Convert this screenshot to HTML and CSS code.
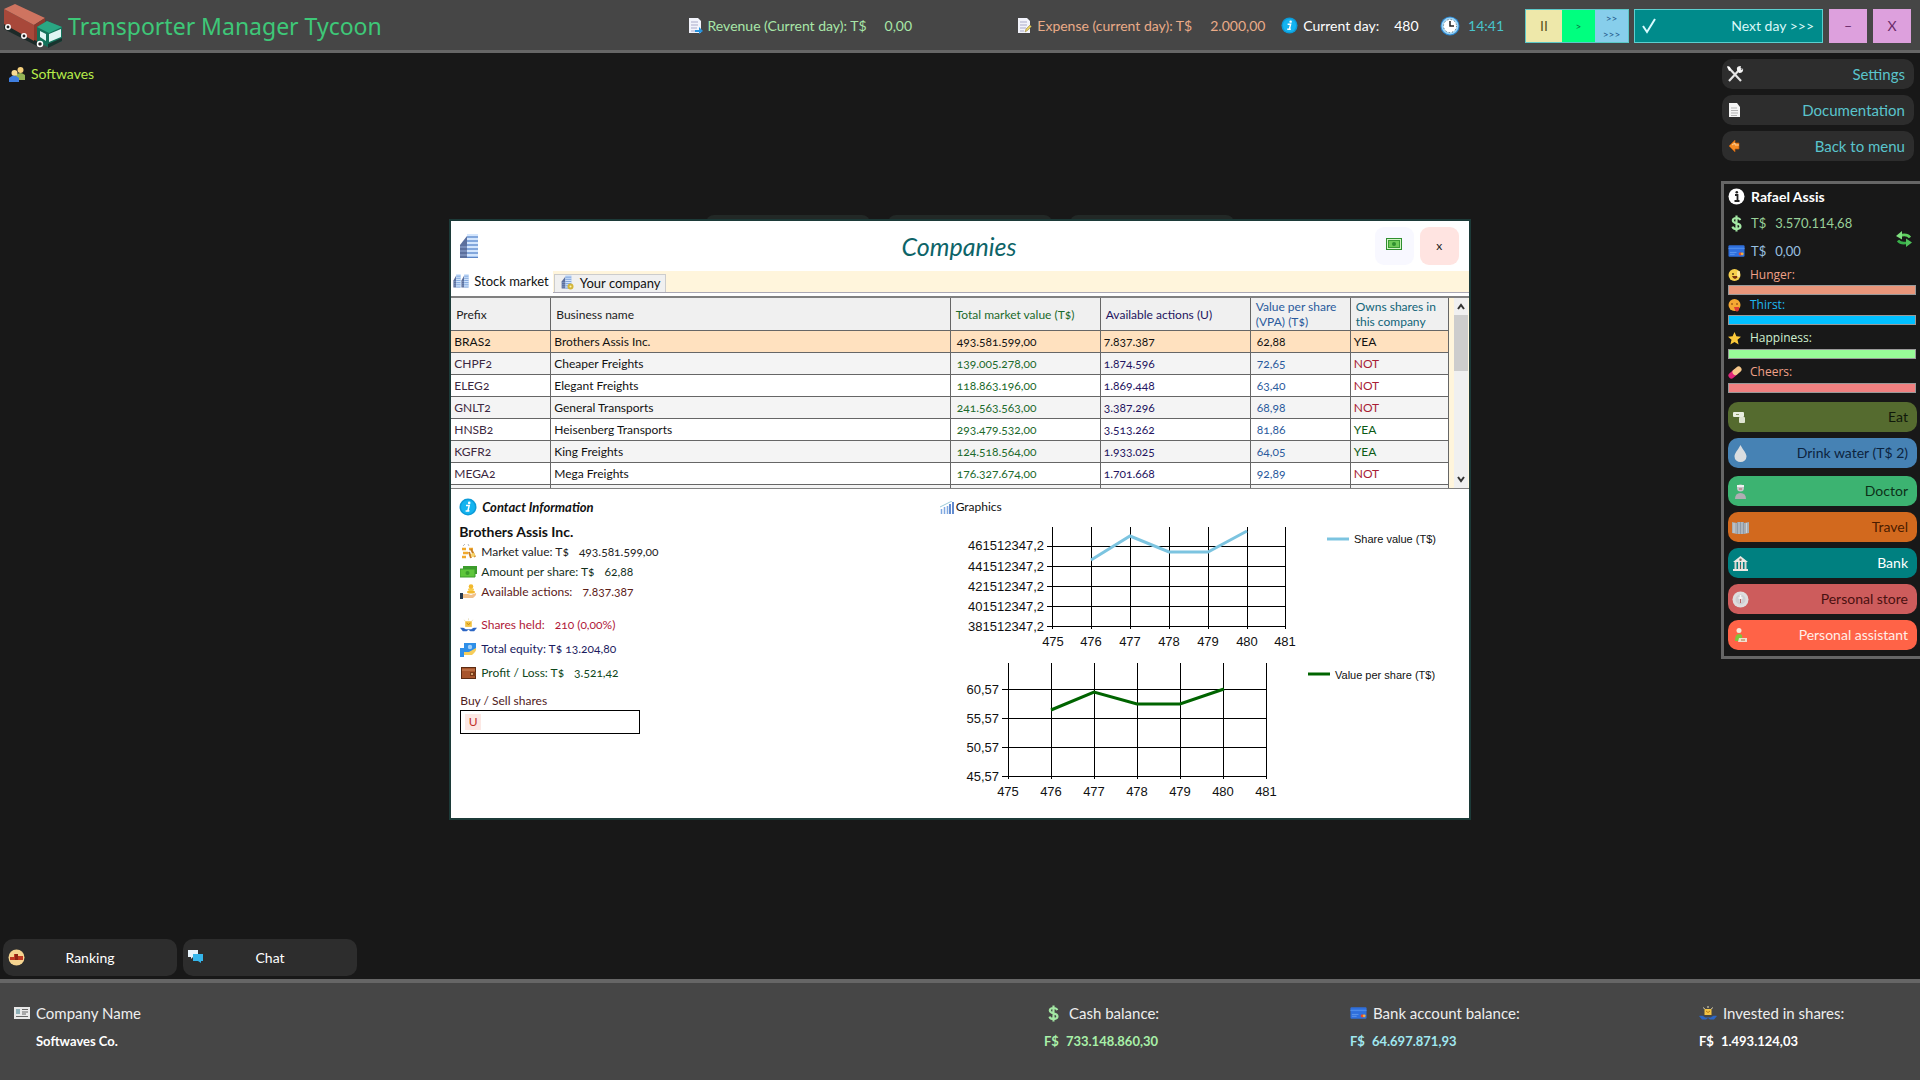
FILE: index.html
```html
<!DOCTYPE html>
<html lang="en">
<head>
	<meta charset="utf-8">
	<title>Transporter Manager Tycoon</title>
	<link rel="stylesheet" href="styles.css">
</head>
<body>

	<!-- shared icons -->
	<svg class="sprite" width="0" height="0" aria-hidden="true">
		<symbol id="i-info" viewBox="0 0 18 18">
			<circle cx="9" cy="9" r="8.5" fill="#0c9bd8"/>
			<circle cx="9" cy="9" r="7" fill="#14b4f0"/>
			<circle cx="10.2" cy="4.9" r="1.3" fill="#fff"/>
			<path d="M7 7.6h3.2l-1.3 5.2h1.5M6.6 12.9h3.6" stroke="#fff" stroke-width="1.5" fill="none"/>
		</symbol>
		<symbol id="i-dollar" viewBox="0 0 12 18">
			<path d="M10 5.4C9.4 3.9 8 3.2 6 3.2c-2.300 0-3.900 1-3.900 2.700C2.100 9.900 10.200 7.900 10.200 12c0 1.800-1.700 2.900-4.100 2.900-2.300 0-3.800-.9-4.400-2.600M6 .5v17" stroke="#a4e8a4" stroke-width="2.300" fill="none"/>
		</symbol>
		<symbol id="i-card" viewBox="0 0 18 14">
			<rect x=".5" y="1" width="17" height="12" rx="1" fill="#2f6fdc"/>
			<path d="M.5 3.500h17v1.500H.5z" fill="#4c8bea"/>
			<path d="M2 8.500h7M2 10.500h5" stroke="#5f97ec"/>
			<circle cx="13" cy="10" r="1.700" fill="#e8452c"/>
			<circle cx="15" cy="10" r="1.500" fill="#f4b03a"/>
		</symbol>
		<symbol id="i-tower" viewBox="0 0 20 26">
			<path d="M1 12L8 3v22H1z" fill="#5b6f9c"/>
			<path d="M8 1h11v24H8z" fill="#a9c8f2"/>
			<path d="M8 2h11M8 6h11M8 10h11M8 14h11M8 18h11M8 22h11" stroke="#d4e6fd" stroke-width="2"/>
			<path d="M8 4h11M8 8h11M8 12h11M8 16h11M8 20h11M8 24.500h11" stroke="#5d86c6"/>
			<path d="M1 14h7M1 18h7M1 22h7" stroke="#96abd4"/>
		</symbol>
		<symbol id="i-shares" viewBox="0 0 18 14">
			<path d="M9 0v2M4.500 1.500l1 1.500M13.500 1.500L12.500 3" stroke="#e9e0c0"/>
			<rect x="5.500" y="3" width="7" height="6" fill="#f3c444"/>
			<path d="M7 5l2 1.500L11 5" stroke="#b97a12" fill="none"/>
			<path d="M0 10c3-.5 5 0 6 1.500h6c1-1.500 3-2 6-1.500l-3 3.500h-4L9 12l-2 1.500H3z" fill="#2c66c4"/>
		</symbol>
	</svg>

	<header class="topbar">
		<div class="brand">
			<svg width="58" height="44" viewBox="0 0 58 44">
				<path d="M0 20l33 16v6L0 25z" fill="#1c2a28"/>
				<path d="M0 5L30 21v16L0 20z" fill="#a8483a"/>
				<path d="M0 5l11-5 30 14-11 7z" fill="#cf7460"/>
				<path d="M30 21l11-7v13l-8 10-3-1z" fill="#8c3a2e"/>
				<path d="M33 23l10-6 15 6v14l-14 6-11-5z" fill="#14715a"/>
				<path d="M33 23l10-6 15 6-13 6z" fill="#2aa783"/>
				<path d="M45 30l12-5v8l-12 5zM36 27l6 3v7l-6-4z" fill="#dff6f4"/>
				<path d="M44 40l14-6v3l-14 7z" fill="#18332e"/>
				<g fill="#222" stroke="#fff" stroke-width="1.500"><circle cx="4" cy="23" r="2.200"/><circle cx="20" cy="32" r="2.200"/><circle cx="36" cy="40" r="2.500"/></g>
			</svg>
			<h1>Transporter Manager Tycoon</h1>
		</div>
		<div class="stat revenue">
			<svg width="14" height="16" viewBox="0 0 14 16"><path d="M0 0h9l3 3v12H0z" fill="#f2f3fb"/><path d="M2 4h7M2 7h7M2 10h6M2 13h4" stroke="#a9a9c9"/><path d="M6 12h4V9l4 4-4 3v-2H6z" fill="#2793dd"/></svg>
			<span>Revenue (Current day): T$</span><span class="val">0,00</span>
		</div>
		<div class="stat expense">
			<svg width="14" height="16" viewBox="0 0 14 16"><path d="M0 0h9l3 3v12H0z" fill="#f2f3fb"/><path d="M2 4h7M2 7h7M2 10h6M2 13h4" stroke="#a9a9c9"/><path d="M7 14l1-3 4-4 1.500 1.500-4 4z" fill="#e7cf62" stroke="#8a7b3a" stroke-width=".5"/></svg>
			<span>Expense (current day): T$</span><span class="val">2.000,00</span>
		</div>
		<div class="stat">
			<svg width="17" height="17"><use href="#i-info"/></svg>
			<span>Current day:</span><span class="day">480</span>
		</div>
		<div class="stat clock">
			<svg width="20" height="20" viewBox="0 0 20 20"><circle cx="10" cy="10" r="9.500" fill="#2b86d0"/><circle cx="10" cy="10" r="8.500" fill="#9bd4f5"/><circle cx="10" cy="10" r="6.500" fill="#fff" stroke="#666" stroke-dasharray="1 2.400"/><path d="M10 5v5h4" stroke="#222" stroke-width="1.500" fill="none"/></svg>
			<span>14:41</span>
		</div>
		<div class="controls">
			<div class="speed">
				<button class="pause">II</button>
				<button class="play">&gt;</button>
				<button class="fast"><span>&gt;&gt;</span><span>&gt;&gt;&gt;</span></button>
			</div>
			<button class="next">
				<svg width="14" height="16" viewBox="0 0 14 16"><path d="M1 8l4 6L13 1" stroke="#d8fbff" stroke-width="2" fill="none"/></svg>
				Next day &gt;&gt;&gt;
			</button>
			<button class="win">–</button>
			<button class="win">X</button>
		</div>
	</header>

	<main>
		<div class="desk">
			<div class="user">
				<svg width="17" height="17" viewBox="0 0 17 17"><circle cx="11.500" cy="4" r="3" fill="#f5d07c"/><path d="M7 14V9q4-4 9 0v5z" fill="#93b254"/><circle cx="5.500" cy="7" r="3" fill="#f8dc93"/><path d="M0 16v-4q5-5 10 0v4z" fill="#3f7fe0"/></svg>
				<span>Softwaves</span>
			</div>
			<div class="ghosts"><div></div><div></div><div></div></div>
			<div class="tools">
				<button>
					<svg width="17" height="17" viewBox="0 0 17 17"><circle cx="8.500" cy="8.500" r="8" fill="#f6d490"/><path d="M2 8h4V5h4v2h5v4H2z" fill="#c23a22"/><path d="M7 5h3v6H7z" fill="#8e2415"/></svg>
					Ranking
				</button>
				<button>
					<svg width="16" height="14" viewBox="0 0 16 14"><path d="M0 1h10v7H5l-2 2V8H0z" fill="#e6f3fb"/><path d="M5 5h10v7h-2v2l-3-2H5z" fill="#35b5ea"/></svg>
					Chat
				</button>
			</div>
		</div>

		<aside>
			<nav>
				<button>
					<svg width="18" height="18" viewBox="0 0 18 18"><path d="M2 2l13 14M15 3L3 16" stroke="#e4e4e4" stroke-width="2.200"/><path d="M11 5q-1-4 4-4l-1 3 2 1 1-2q1 5-4 5z" fill="#f4f4f4"/><path d="M1 1l3 1 1 3-2 1z" fill="#fff"/></svg>
					Settings
				</button>
				<button>
					<svg width="18" height="16" viewBox="0 0 18 16"><path d="M3 1h8l3 4v10H3z" fill="#f4f4f4"/><path d="M5 6h6M5 8.500h7M5 11h7M5 13.500h6" stroke="#b3b3b3"/></svg>
					Documentation
				</button>
				<button>
					<svg width="18" height="14" viewBox="0 0 18 14"><path d="M3 7l6-6v3h4v6H9v3z" fill="#f58a24" stroke="#b85a10" stroke-width=".7"/><path d="M6 6l3-2v2h4" stroke="#ffcf96" fill="none"/></svg>
					Back to menu
				</button>
			</nav>

			<section class="player">
				<div class="line name">
					<svg width="17" height="17" viewBox="0 0 17 17"><circle cx="8.500" cy="8.500" r="8" fill="#fff"/><path d="M7 7h2.500v6M6.500 13h5" stroke="#222" stroke-width="1.800" fill="none"/><circle cx="8.800" cy="4.200" r="1.300" fill="#222"/></svg>
					<span>Rafael Assis</span>
				</div>
				<div class="wallet">
					<div>
						<div class="line cash"><svg width="17" height="17"><use href="#i-dollar"/></svg><span>T$</span><span>3.570.114,68</span></div>
						<div class="line bank"><svg width="17" height="14"><use href="#i-card"/></svg><span>T$</span><span>0,00</span></div>
					</div>
					<button class="refresh" aria-label="Refresh">
						<svg width="18" height="18" viewBox="0 0 18 18"><path d="M15 7.500Q12 3.500 5 5.500" stroke="#5fd05f" stroke-width="2.800" fill="none"/><path d="M7 1v8.500L1 6z" fill="#7fe07f"/><path d="M3 10.500q3 4 10 2" stroke="#38b04a" stroke-width="2.800" fill="none"/><path d="M11 8.500V17l6-4.500z" fill="#4fc25a"/></svg>
					</button>
				</div>
				<div class="need hunger">
					<svg width="14" height="13" viewBox="0 0 14 13"><circle cx="6.500" cy="6" r="6" fill="#f8d04c"/><circle cx="5" cy="5" r="1" fill="#5a3b10"/><path d="M4 7h6q-1 3-3 3T4 7z" fill="#7b3210"/><rect x="9" y="2" width="3" height="6" rx="1" fill="#fce69b"/></svg>
					<label for="hunger">Hunger:</label>
				</div>
				<progress id="hunger" class="hunger" value="100" max="100"></progress>
				<div class="need thirst">
					<svg width="14" height="13" viewBox="0 0 14 13"><circle cx="6.500" cy="6" r="6" fill="#f5a832"/><path d="M3 5h2M8 5h2" stroke="#7b3b10"/><path d="M6 8h5v3q-2 3-4 0z" fill="#dd3b34"/></svg>
					<label for="thirst">Thirst:</label>
				</div>
				<progress id="thirst" class="thirst" value="100" max="100"></progress>
				<div class="need tall happy">
					<svg width="14" height="13" viewBox="0 0 14 13"><path d="M6.500 0l1.900 4.300 4.600.4-3.500 3.100 1.100 4.700-4.100-2.500-4.100 2.500 1.100-4.700L0 4.700l4.600-.4z" fill="#fbc93a"/></svg>
					<label for="happy">Happiness:</label>
				</div>
				<progress id="happy" class="happy" value="100" max="100"></progress>
				<div class="need tall cheers">
					<svg width="14" height="13" viewBox="0 0 14 13"><path d="M3.500 9.500L7 6.500" stroke="#e0257a" stroke-width="6" stroke-linecap="round"/><path d="M7.500 6L10.500 3.500" stroke="#f6c78a" stroke-width="6" stroke-linecap="round"/></svg>
					<label for="cheers">Cheers:</label>
				</div>
				<progress id="cheers" class="cheers" value="100" max="100"></progress>

				<div class="acts">
					<button class="eat"><svg width="17" height="17" viewBox="0 0 17 17"><rect x="1" y="3" width="11" height="5" rx="1" fill="#e9eee0"/><rect x="7" y="8" width="6" height="6" rx="1" fill="#dfe4d2"/><path d="M4 5.500h3" stroke="#8c9a6a"/></svg>Eat</button>
					<button class="drink"><svg width="17" height="17" viewBox="0 0 17 17"><path d="M8.500 0C6 5 2.500 8 2.500 11.500a6 5.500 0 0 0 12 0C14.500 8 11 5 8.500 0z" fill="#d9dde0"/></svg>Drink water (T$ 2)</button>
				</div>
				<div class="acts">
					<button class="doctor"><svg width="17" height="17" viewBox="0 0 17 17"><circle cx="8.500" cy="5" r="3.500" fill="#c5c5c9"/><path d="M5 2h7v2H5z" fill="#f0f0f0"/><path d="M3 16q0-6 5.500-6t5.500 6z" fill="#b0aeb4"/><path d="M7 6h3" stroke="#a66"/></svg>Doctor</button>
					<button class="travel"><svg width="17" height="17" viewBox="0 0 17 17"><path d="M0 3l5 1v11l-5-1zM12 4l5-1v11l-5 1z" fill="#a9adb2"/><path d="M5 3h7v12H5z" fill="#8f99a5"/><path d="M7 3v12M10 3v12M2 4v10M14.500 4v10" stroke="#cbd2d8"/></svg>Travel</button>
					<button class="bankbtn"><svg width="17" height="17" viewBox="0 0 17 17"><path d="M1 7l7.500-6L16 7zM1 14h15v2H1z" fill="#ece9e4"/><path d="M3.500 7v7M7 7v7M10 7v7M13.500 7v7" stroke="#dcd8d2" stroke-width="2"/><path d="M8.500 10v4" stroke="#6b5a50"/><circle cx="8.500" cy="4.800" r="1.200" fill="#7a6c60"/></svg>Bank</button>
					<button class="store"><svg width="17" height="17" viewBox="0 0 17 17"><circle cx="8.500" cy="8.500" r="8" fill="#dedede"/><circle cx="8.500" cy="8.500" r="5" fill="#cfcfd2"/><path d="M8.500 4v7M6.500 7h4" stroke="#f6f6f6" stroke-width="1.500"/><path d="M8.500 8v4" stroke="#b66"/></svg>Personal store</button>
					<button class="assist"><svg width="17" height="17" viewBox="0 0 17 17"><circle cx="7" cy="3.500" r="2.500" fill="#f3e9dc"/><path d="M3 14q0-7 4-7t3 4l-2 3z" fill="#7fc53c"/><path d="M7 11h8v4H6z" fill="#f0dfd0"/><path d="M9 13h4" stroke="#b0773c"/></svg>Personal assistant</button>
				</div>
			</section>
		</aside>

		<div class="dialog" role="dialog" aria-labelledby="dlg-title">
			<div class="dlg-head">
				<svg width="20" height="26"><use href="#i-tower"/></svg>
				<h2 id="dlg-title">Companies</h2>
				<button class="money" aria-label="Money">
					<svg width="16" height="12" viewBox="0 0 16 12"><rect x=".5" y=".5" width="15" height="11" fill="#d6f5c8" stroke="#2f8f2f"/><rect x="2.500" y="2.500" width="11" height="7" fill="#6ecb58" stroke="#3a9b35"/><circle cx="8" cy="6" r="2" fill="#2f8f2f"/></svg>
				</button>
				<button class="close">x</button>
			</div>

			<div class="tabs">
				<button class="tab active">
					<svg width="8" height="14" viewBox="0 0 20 26" preserveAspectRatio="none"><use href="#i-tower" width="20" height="26"/></svg><svg width="8" height="14" viewBox="0 0 20 26" preserveAspectRatio="none"><use href="#i-tower" width="20" height="26"/></svg>
					<span>Stock market</span>
				</button>
				<button class="tab">
					<svg width="14" height="15" viewBox="0 0 14 15"><use href="#i-tower" width="11" height="14"/><circle cx="9.500" cy="11.500" r="3" fill="#d3b63a"/><circle cx="9.500" cy="11.500" r="1" fill="#fff2b0"/></svg>
					<span>Your company</span>
				</button>
			</div>

			<div class="grid">
				<div class="rows">
					<table>
						<colgroup><col class="c1"><col><col class="c3"><col class="c4"><col class="c5"><col class="c6"></colgroup>
						<thead>
							<tr><th>Prefix</th><th>Business name</th><th>Total market value (T$)</th><th>Available actions (U)</th><th>Value per share (VPA) (T$)</th><th>Owns shares in this company</th></tr>
						</thead>
						<tbody>
							<tr class="sel"><td>BRAS2</td><td>Brothers Assis Inc.</td><td>493.581.599,00</td><td>7.837.387</td><td>62,88</td><td>YEA</td></tr>
							<tr><td>CHPF2</td><td>Cheaper Freights</td><td>139.005.278,00</td><td>1.874.596</td><td>72,65</td><td class="not">NOT</td></tr>
							<tr><td>ELEG2</td><td>Elegant Freights</td><td>118.863.196,00</td><td>1.869.448</td><td>63,40</td><td class="not">NOT</td></tr>
							<tr><td>GNLT2</td><td>General Transports</td><td>241.563.563,00</td><td>3.387.296</td><td>68,98</td><td class="not">NOT</td></tr>
							<tr><td>HNSB2</td><td>Heisenberg Transports</td><td>293.479.532,00</td><td>3.513.262</td><td>81,86</td><td>YEA</td></tr>
							<tr><td>KGFR2</td><td>King Freights</td><td>124.518.564,00</td><td>1.933.025</td><td>64,05</td><td>YEA</td></tr>
							<tr><td>MEGA2</td><td>Mega Freights</td><td>176.327.674,00</td><td>1.701.668</td><td>92,89</td><td class="not">NOT</td></tr>
							<tr><td></td><td></td><td></td><td></td><td></td><td></td></tr>
						</tbody>
					</table>
				</div>
				<div class="scroll">
					<svg width="14" height="17" viewBox="0 0 14 17"><path d="M4 11l3-4 3 4" stroke="#333" stroke-width="2" fill="none"/></svg>
					<div class="thumb"></div>
					<svg width="14" height="17" viewBox="0 0 14 17"><path d="M4 6l3 4 3-4" stroke="#333" stroke-width="2" fill="none"/></svg>
				</div>
			</div>

			<div class="details">
				<section class="contact">
					<h3><svg width="18" height="18"><use href="#i-info"/></svg>Contact Information</h3>
					<h4>Brothers Assis Inc.</h4>
					<ul class="facts">
						<li>
							<svg width="17" height="16" viewBox="0 0 17 16"><path d="M3 2l2-2M8 0l1 2" stroke="#b9b9b9"/><path d="M2 5h4M9 5h4M3 9h5M2 13h4" stroke="#f0a92c" stroke-width="2.500"/><path d="M11 5l4 8M9 8l2 6" stroke="#c97f24" stroke-width="2"/><circle cx="13" cy="11" r="2" fill="#f8d56a"/></svg>
							<span>Market value: T$</span><b>493.581.599,00</b>
						</li>
						<li class="amount">
							<svg width="17" height="14" viewBox="0 0 17 14"><path d="M3 1h14v8H3z" fill="#3c9c2c"/><path d="M0 4h15v8H0z" fill="#5fc63c" stroke="#3c9c2c"/><circle cx="7.500" cy="8" r="2" fill="#3c9c2c"/></svg>
							<span>Amount per share: T$</span><b>62,88</b>
						</li>
						<li class="avail">
							<svg width="17" height="16" viewBox="0 0 17 16"><rect x="0" y="9" width="3" height="6" fill="#26394f"/><path d="M3 10h5l3 1 5-2q1 2-3 5H3z" fill="#f1c08a"/><ellipse cx="11" cy="8" rx="4" ry="1.500" fill="#f2b92e"/><ellipse cx="11" cy="5.500" rx="3" ry="1.500" fill="#f8cd4c"/><circle cx="11" cy="2.500" r="2.300" fill="#f2b92e"/></svg>
							<span>Available actions:</span><b>7.837.387</b>
						</li>
					</ul>
					<ul class="facts mine">
						<li class="held">
							<svg width="17" height="14"><use href="#i-shares"/></svg>
							<span>Shares held:</span><b>210 (0,00%)</b>
						</li>
						<li class="equity">
							<svg width="17" height="15" viewBox="0 0 17 15"><path d="M4 1h12v7L7 11H4z" fill="#2f8fe8"/><circle cx="10" cy="5" r="2.200" fill="#9fd0fb"/><rect y="6" width="4" height="9" fill="#2f8fe8"/><path d="M4 10l5 0 7-4q1 3-4 7H4z" fill="#f6cd5a"/></svg>
							<span>Total equity: T$ 13.204,80</span>
						</li>
						<li class="profit">
							<svg width="17" height="14" viewBox="0 0 17 14"><rect x="1.500" y="1.500" width="14" height="11" fill="#a8552c" stroke="#5b2b12"/><path d="M2 4h13" stroke="#d08a5c"/><rect x="10" y="6" width="6" height="4" fill="#7a3a1a"/><circle cx="12" cy="8" r="1" fill="#f2c48a"/></svg>
							<span>Profit / Loss: T$</span><b>3.521,42</b>
						</li>
					</ul>
					<label class="buy" for="qty">Buy / Sell shares</label>
					<div class="qty"><span>U</span><input id="qty" type="text"></div>
				</section>

				<section class="graphs">
					<h3><svg width="14" height="13" viewBox="0 0 14 13"><path d="M1.500 13V8M4.500 13V6M7.500 13V5" stroke="#7fa8e0" stroke-width="1.500"/><path d="M10 13V3M13 13V1" stroke="#2f66c0" stroke-width="1.500"/><path d="M0 6l12-6" stroke="#6fb3c8" stroke-width=".7"/></svg>Graphics</h3>
					<svg class="chart" width="486" height="137" viewBox="0 0 486 137">
						<path class="axis" d="M96.500 10v102M135.500 10v102M174.500 10v102M213.500 10v102M252.500 10v102M291.500 10v102M329.500 10v102M91 29.500h239M91 49.500h239M91 69.500h239M91 89.500h239M91 109.500h239"/>
						<polyline class="share" points="135,43 174,19 213,35 252,35 291,14"/>
						<g class="ylab"><text x="88" y="33">461512347,2</text><text x="88" y="54">441512347,2</text><text x="88" y="74">421512347,2</text><text x="88" y="94">401512347,2</text><text x="88" y="114">381512347,2</text></g>
						<g class="xlab"><text x="97" y="129">475</text><text x="135" y="129">476</text><text x="174" y="129">477</text><text x="213" y="129">478</text><text x="252" y="129">479</text><text x="291" y="129">480</text><text x="329" y="129">481</text></g>
						<path class="share" d="M371 22h22"/>
						<text class="legend" x="398" y="26">Share value (T$)</text>
					</svg>
					<svg class="chart" width="486" height="152" viewBox="0 0 486 152">
						<path class="axis" d="M52.500 9v116M95.500 9v116M138.500 9v116M181.500 9v116M224.500 9v116M267.500 9v116M310.500 9v116M46 35.500h265M46 64.500h265M46 93.500h265M46 122.500h265"/>
						<polyline class="vps" points="95,56 138,38 181,50 224,50 268,35"/>
						<g class="ylab"><text x="43" y="40">60,57</text><text x="43" y="69">55,57</text><text x="43" y="98">50,57</text><text x="43" y="127">45,57</text></g>
						<g class="xlab"><text x="52" y="142">475</text><text x="95" y="142">476</text><text x="138" y="142">477</text><text x="181" y="142">478</text><text x="224" y="142">479</text><text x="267" y="142">480</text><text x="310" y="142">481</text></g>
						<path class="vps" d="M352 20h22"/>
						<text class="legend" x="379" y="25">Value per share (T$)</text>
					</svg>
				</section>
			</div>
		</div>
	</main>

	<footer>
		<div class="sum company">
			<p><svg width="16" height="12" viewBox="0 0 16 12"><rect width="16" height="12" fill="#e8e8e8"/><rect x="2" y="2" width="4" height="5" fill="#8fb0b8"/><path d="M8 2.500h6M8 5h6M8 7h4M2 9.500h12" stroke="#666"/></svg>Company Name</p>
			<strong>Softwaves Co.</strong>
		</div>
		<div class="sum cash">
			<p><svg width="19" height="17"><use href="#i-dollar"/></svg>Cash balance:</p>
			<strong><span>F$</span>733.148.860,30</strong>
		</div>
		<div class="sum bank">
			<p><svg width="17" height="14"><use href="#i-card"/></svg>Bank account balance:</p>
			<strong><span>F$</span>64.697.871,93</strong>
		</div>
		<div class="sum">
			<p><svg width="18" height="14"><use href="#i-shares"/></svg>Invested in shares:</p>
			<strong><span>F$</span>1.493.124,03</strong>
		</div>
	</footer>

</body>
</html>
```
FILE: styles.css
```css
*{
	box-sizing: border-box;
	margin: 0;
	padding: 0;
}
body {
	min-height: 100vh;
	display: flex;
	flex-direction: column;
	background: #181818;
	color: #fff;
	font: 14px/20px Lato, "Open Sans", sans-serif;
}
button {
	font: inherit;
	color: inherit;
	border: 0;
	cursor: pointer;
}
svg {
	flex: none;
}
ul {
	list-style: none;
}
.sprite {
	position: absolute;
}

/* top bar */
.topbar {
	display: grid;
	grid-template-columns: 685fr 330fr 263fr 159fr 85fr auto;
	align-items: center;
	height: 53px;
	padding: 1px 9px 0 4px;
	background: #464646;
	border-bottom: 3px solid #666;
}
.brand {
	display: flex;
	align-items: center;
	gap: 6px;
}
.brand h1 {
	font: 23px/30px "Noto Sans", sans-serif;
	color: #3ec878;
	white-space: nowrap;
}
.stat {
	display: flex;
	align-items: center;
	gap: 5px;
	white-space: nowrap;
}
.val {
	margin-left: 13px;
}
.day {
	margin-left: 10px;
}
.revenue {
	color: #a8e6a8;
}
.expense {
	color: #eaab88;
}
.clock {
	gap: 8px;
}
.clock span {
	color: #48c4cc;
}
.controls {
	display: flex;
	gap: 6px;
	height: 34px;
}
.speed {
	display: flex;
	margin-right: -1px;
	border: 1px solid #5cc8c8;
}
.speed button {
	width: 33px;
}
.speed .pause {
	width: 36px;
	background: #eee8aa;
	color: #5a5320;
}
.speed .play {
	background: #00ff7f;
	color: #0a7040;
	font-size: 10px;
}
.speed .fast {
	display: flex;
	flex-direction: column;
	justify-content: space-between;
	align-items: center;
	background: #87ceeb;
	color: #24588a;
	font-size: 10px;
	line-height: 16px;
}
.next {
	display: flex;
	align-items: center;
	justify-content: space-between;
	width: 189px;
	padding: 0 8px 0 7px;
	background: #008b8b;
	border: 1px solid #5cd0d0;
	color: #d8f8f8;
}
.win {
	width: 38px;
	background: #dda0dd;
	color: #6a2a6a;
}

/* work area */
main {
	position: relative;
	flex: 1;
	display: flex;
}
.desk {
	flex: 1;
	display: flex;
	flex-direction: column;
}
.user {
	display: flex;
	align-items: center;
	gap: 5px;
	padding: 11px 9px;
	color: #b6ec4a;
}
.ghosts {
	display: flex;
	gap: 18px;
	margin: 120px 0 0 41%;
}
.ghosts div {
	width: 164px;
	height: 30px;
	border-radius: 8px;
	background: #222826;
}
.tools {
	display: flex;
	gap: 6px;
	margin-top: auto;
	padding: 0 3px 3px;
}
.tools button {
	position: relative;
	width: 174px;
	height: 37px;
	border-radius: 10px;
	background: #2d2d2d;
}
.tools svg {
	position: absolute;
	left: 5px;
	top: 10px;
}
aside {
	width: 199px;
	padding-top: 6px;
}
nav {
	display: flex;
	flex-direction: column;
	gap: 6px;
	padding: 0 6px 0 1px;
	font-size: 15px;
}
nav button, .acts button {
	display: flex;
	align-items: center;
	justify-content: space-between;
	height: 30px;
	padding: 0 9px 0 4px;
	border-radius: 10px;
}
nav button {
	padding-bottom: 1px;
	background: #2d2d2d;
	color: #5ac4cc;
}
.player {
	margin-top: 20px;
	padding: 0 3px 6px 4px;
	border: 3px solid #666;
	border-right: 0;
}
.line {
	display: flex;
	align-items: center;
	gap: 6px;
	height: 28px;
	font-size: 13px;
}
.line span + span {
	margin-left: 3px;
}
.line.name {
	height: 25px;
	font-weight: bold;
	font-size: 14px;
}
.line.cash {
	color: #98d098;
}
.line.bank {
	color: #98c0e0;
}
.wallet {
	display: flex;
	justify-content: space-between;
	align-items: center;
}
.refresh {
	display: flex;
	padding: 3px 4px 0;
	background: none;
}
.need {
	display: flex;
	align-items: center;
	gap: 8px;
	height: 20px;
	font: 12px/16px "Open Sans", sans-serif;
}
.need.tall {
	height: 24px;
	padding-top: 2px;
}
.need.hunger, .need.cheers {
	color: #f0a088;
}
.need.thirst {
	color: #20b8f0;
}
.need.happy {
	color: #d0f0d0;
}
progress {
	display: block;
	width: calc(100% - 1px);
	height: 10px;
	appearance: none;
	border: 1px solid #999;
}
progress::-webkit-progress-bar {
	background: #181818;
}
progress.hunger::-webkit-progress-value {
	background: #e9967a;
}
progress.thirst::-webkit-progress-value {
	background: #00bfff;
}
progress.happy::-webkit-progress-value {
	background: #98fb98;
}
progress.cheers::-webkit-progress-value {
	background: #f08080;
}
.acts {
	display: flex;
	flex-direction: column;
	gap: 6px;
	margin-top: 9px;
}
.acts + .acts {
	margin-top: 8px;
}
.acts .eat { background: #556b2f; color: #10180a; }
.acts .drink { background: #4682b4; color: #0c2440; }
.acts .doctor { background: #3cb371; color: #0c3018; }
.acts .travel { background: #d2691e; color: #4a1c00; }
.acts .bankbtn { background: #008080; color: #fff; }
.acts .store { background: #cd5c5c; color: #4a1010; }
.acts .assist { background: #ff6347; color: #ffeee8; }

/* companies window */
.dialog {
	position: absolute;
	top: 166px;
	left: 0;
	right: 0;
	width: 53.2%;
	min-width: 900px;
	margin: 0 auto;
	border: 2px solid #1c3a38;
	background: #fff;
	color: #222;
	font: 12px/20px Lato, "Open Sans", sans-serif;
	font-variant-numeric: oldstyle-nums;
}
.dlg-head {
	display: flex;
	align-items: center;
	height: 50px;
	padding: 0 10px 0 8px;
	gap: 6px;
}
.dlg-head h2 {
	flex: 1;
	padding-left: 64px;
	font: italic 25px/30px Lato, sans-serif;
	color: #0d6468;
	text-align: center;
}
.dlg-head button {
	width: 39px;
	height: 38px;
	border-radius: 9px;
}
.money {
	background: #f8f8ff;
}
.close {
	background: #ffe4e1;
}
.tabs {
	display: flex;
	align-items: flex-end;
	height: 22px;
	background: #fff5dc;
	border-bottom: 1px solid #aaa8b4;
	font-size: 13px;
}
.tab {
	display: flex;
	align-items: center;
	height: 18px;
	padding: 0 4px 2px 6px;
	background: #f0f0f0;
	border: 1px solid #ccc;
	border-bottom: 0;
}
.tab.active {
	height: 22px;
	margin: 0 1px -1px 0;
	padding: 0 4px 2px 2px;
	background: #fff;
	border: 0;
}
.tab span {
	margin-left: 5px;
	color: #111;
}
.grid {
	display: flex;
	height: 193px;
	margin-top: 3px;
	border-top: 2px solid #808080;
	border-bottom: 1px solid #808080;
	background: #fff5dc;
	overflow: hidden;
}
.rows {
	flex: 1;
	overflow: hidden;
}
table {
	width: 100%;
	table-layout: fixed;
	border-collapse: separate;
	border-spacing: 0;
}
.c1 { width: 100px; }
.c3 { width: 150px; }
.c4 { width: 150px; }
.c5 { width: 100px; }
.c6 { width: 98px; }
th, td {
	border-right: 1px solid #666;
	border-bottom: 1px solid #666;
	text-align: left;
	white-space: nowrap;
}
th {
	height: 33px;
	padding: 0 5px;
	background: #f0f0f0;
	font-weight: normal;
	line-height: 15px;
	white-space: normal;
}
td {
	height: 22px;
	padding: 0 3px;
	background: #fff;
	line-height: 18px;
}
tr:nth-child(even) td {
	background: #f4f4f4;
}
td:nth-child(n+3) { padding-left: 6px; }
td:nth-child(4), td:nth-child(6) { padding-left: 3px; }
td:nth-child(1) { color: #3c2840; }
td:nth-child(2) { color: #111; }
th:nth-child(3), td:nth-child(3) { color: #1c6a2c; }
th:nth-child(4), td:nth-child(4) { color: #241460; }
th:nth-child(5), td:nth-child(5) { color: #2a5a9c; }
th:nth-child(6) { color: #106478; }
td:nth-child(6) { color: #0a5a14; }
tr td.not { color: #a81c34; }
tr.sel td {
	background: #ffe1bf;
	color: #111;
}
.scroll {
	display: flex;
	flex-direction: column;
	width: 14px;
	margin: 0 1px 0 5px;
	background: #f0f0f0;
}
.thumb {
	height: 56px;
	margin-bottom: auto;
	background: #cdcdcd;
}
.details {
	display: grid;
	grid-template-columns: 48% 52%;
	padding: 8px 0 12px;
}
.details h3 {
	display: flex;
	align-items: center;
	font-size: 13px;
	line-height: 20px;
	color: #111;
}
.contact {
	padding-left: 8px;
}
.contact h3 {
	gap: 5px;
	font-style: italic;
}
.contact h4 {
	margin-top: 5px;
	font-size: 14px;
	line-height: 20px;
	color: #111;
}
.facts li {
	display: flex;
	align-items: center;
	gap: 4px;
	height: 20px;
	padding-left: 1px;
}
.facts b {
	margin-left: 6px;
	font-weight: normal;
}
.mine {
	margin-top: 11px;
}
.mine li {
	height: 24px;
}
.amount { color: #14301c; }
.avail { color: #5c2018; }
.held { color: #b01838; }
.equity { color: #1c1c60; }
.profit { color: #10481c; }
.buy {
	display: block;
	margin-top: 8px;
	padding-left: 1px;
	line-height: 16px;
	color: #50201c;
}
.qty {
	display: flex;
	align-items: center;
	width: 180px;
	height: 24px;
	margin: 1px 0 1px 1px;
	padding-left: 4px;
	border: 1px solid #000;
}
.qty span {
	width: 16px;
	background: #fce8e4;
	color: #c03028;
	line-height: 16px;
	text-align: center;
}
.qty input {
	flex: 1;
	min-width: 0;
	height: 20px;
	border: 0;
	outline: 0;
}
.graphs h3 {
	gap: 2px;
	font-weight: normal;
	font-size: 12px;
}
.chart {
	display: block;
	margin-left: 16px;
	font: 13px "Liberation Sans", Arial, sans-serif;
	fill: #111;
}
.axis {
	stroke: #000;
	fill: none;
	shape-rendering: crispEdges;
}
.share, .vps {
	fill: none;
	stroke: #7cc4e0;
	stroke-width: 3;
}
.vps {
	stroke: #006400;
}
.ylab {
	text-anchor: end;
}
.xlab {
	text-anchor: middle;
}
.legend {
	font-size: 11px;
}

/* bottom bar */
footer {
	display: grid;
	grid-template-columns: 1030fr 306fr 349fr 221fr;
	height: 101px;
	padding: 20px 0 0 14px;
	background: #464646;
	border-top: 4px solid #666;
}
.sum p {
	display: flex;
	align-items: center;
	gap: 6px;
	height: 20px;
	color: #eee;
	font-size: 15px;
}
.sum strong {
	display: block;
	margin-top: 8px;
	font-size: 13px;
	font-weight: bold;
}
.sum strong span {
	margin-right: 7px;
}
.company strong {
	padding-left: 22px;
}
.sum.cash strong {
	color: #a8f0a8;
}
.sum.bank strong {
	color: #a0e8f0;
}
```
